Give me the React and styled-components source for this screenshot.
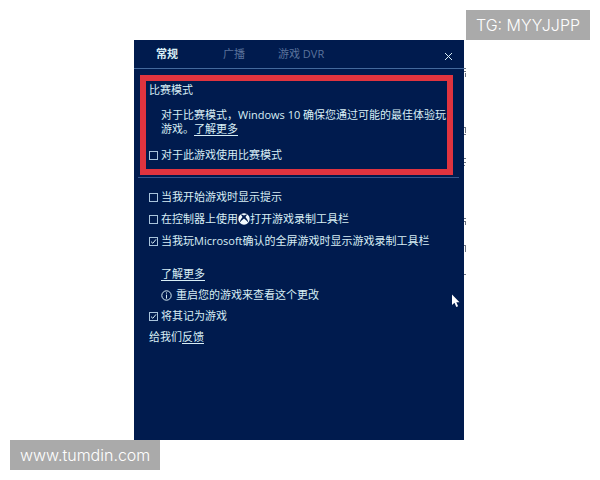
import { useState } from "react";
import styled, { createGlobalStyle } from "styled-components";

const GlobalStyle = createGlobalStyle`
    * {
        box-sizing: border-box;
    }
    body {
        margin: 0;
        background-color: white;
    }
`
const Page = styled.div`
    position: relative;
    min-height: 100vh;
    padding: 40px 0;
    display: grid;
    grid-template-columns: 134fr 330fr 136fr;
`
const Watermark = styled.div`
    position: absolute;
    z-index: 2;
    height: 30px;
    padding: 0 10px;
    background-color: #aaaaaa;
    color: white;
    font-family: Inter, Arial, sans-serif;
    font-size: 16px;
    font-weight: 300;
    line-height: 30px;
`
const TopMark = styled(Watermark)`
    top: 10px;
    right: 10px;
`
const BottomMark = styled(Watermark)`
    bottom: 10px;
    left: 10px;
`
const Panel = styled.main`
    grid-column: 2;
    position: relative;
    background-color: #001b4e;
    color: #d8eef5;
    font-family: "Open Sans", "Noto Sans CJK SC", sans-serif;
    font-size: 11px;
    line-height: 14px;
`
const Header = styled.header`
    display: flex;
    align-items: center;
    height: 29px;
    padding: 0 9px 0 22px;
    border-bottom: 1px solid #44699c;
`
const Tabs = styled.nav`
    flex: 1;
    display: flex;
`
const Tab = styled.button`
    width: ${(props) => props.$width};
    padding: 0;
    border: none;
    background: none;
    text-align: left;
    white-space: nowrap;
    font: inherit;
    font-weight: ${(props) => (props.$active ? 700 : 400)};
    color: ${(props) => (props.$active ? "#d8eef5" : "#5b739c")};
`
const Close = styled.button`
    display: flex;
    padding: 4px 2px 0;
    border: none;
    background: none;
    color: #d8eef5;
`
const Highlight = styled.section`
    margin: 6px 11px 2px 6px;
    padding: 2px 0 7px 3px;
    border: 6px solid #e0343f;
`
const Title = styled.h1`
    margin: 0;
    font-size: 11px;
    font-weight: 400;
    line-height: 14px;
`
const Description = styled.p`
    margin: 11px 0 12px;
    padding-left: 12px;
`
const Link = styled.a`
    color: inherit;
    text-decoration: underline;
    text-underline-offset: 2px;
`
const Options = styled.section`
    margin: 0 5px 0 4px;
    padding: 12px 0 0 11px;
    border-top: 1px solid #34568c;
    display: flex;
    flex-direction: column;
    gap: 8px;
`
const Footer = styled.section`
    margin: 19px 15px 0;
    display: flex;
    flex-direction: column;
    gap: 7px;
`
const Indented = styled.div`
    display: flex;
    align-items: center;
    gap: 4px;
    height: 14px;
    padding-left: 12px;
`
const Label = styled.label`
    display: flex;
    align-items: center;
    gap: 3px;
    height: 14px;
    white-space: nowrap;
`
const LabelText = styled.span`
    display: flex;
    align-items: center;
`
const Checkbox = styled.input`
    appearance: none;
    width: 9px;
    height: 9px;
    margin: 0;
    border: 1px solid #a9c4dc;

    &:checked {
        background: url("data:image/svg+xml,%3Csvg xmlns='http://www.w3.org/2000/svg' viewBox='0 0 7 7'%3E%3Cpath d='M1 3.6 2.8 5.3 6 1.4' fill='none' stroke='%23d8eef5'/%3E%3C/svg%3E");
    }
`
const Cursor = styled.svg`
    position: absolute;
    top: 254px;
    right: 4px;
`
// edge of the page text behind the panel
const Behind = styled.svg`
    position: absolute;
    top: 0;
    left: 100%;
`

function Option({ children, checked }) {
    const [on, setOn] = useState(Boolean(checked));
    return (
        <Label>
            <Checkbox type="checkbox" checked={on} onChange={() => setOn(!on)} />
            <LabelText>{children}</LabelText>
        </Label>
    );
}

function XboxIcon() {
    return (
        <svg width="12" height="12" viewBox="0 0 12 12">
            <circle cx="6" cy="6" r="5.7" fill="#f2fbff" />
            <path
                d="M2.6 1.2Q4.4 1.3 6 2.6Q7.6 1.3 9.4 1.2Q8.6 2.6 7.5 3.9Q10 6.6 10.5 10Q8.6 7.6 6 5.6Q3.4 7.6 1.5 10Q2 6.6 4.5 3.9Q3.4 2.6 2.6 1.2Z"
                fill="#001b4e"
            />
        </svg>
    );
}

function InfoIcon() {
    return (
        <svg width="11" height="11" viewBox="0 0 11 11" fill="none" stroke="#d8eef5">
            <circle cx="5.5" cy="5.5" r="4.7" />
            <path d="M5.5 2.4v1.2M5.5 4.6v4" />
        </svg>
    );
}

export default function App() {
    return (
        <Page>
            <GlobalStyle />
            <TopMark>TG: MYYJJPP</TopMark>
            <Panel>
                <Header>
                    <Tabs>
                        <Tab $active $width="67px">常规</Tab>
                        <Tab $width="55px">广播</Tab>
                        <Tab $width="60px">游戏 DVR</Tab>
                    </Tabs>
                    <Close aria-label="关闭">
                        <svg width="9" height="9" viewBox="0 0 9 9" stroke="currentColor">
                            <path d="M1 1l7 7M8 1l-7 7" />
                        </svg>
                    </Close>
                </Header>
                <Highlight>
                    <Title>比赛模式</Title>
                    <Description>
                        对于比赛模式，Windows 10 确保您通过可能的最佳体验玩
                        <br />
                        游戏。<Link href="#">了解更多</Link>
                    </Description>
                    <Option>对于此游戏使用比赛模式</Option>
                </Highlight>
                <Options>
                    <Option>当我开始游戏时显示提示</Option>
                    <Option>在控制器上使用<XboxIcon />打开游戏录制工具栏</Option>
                    <Option checked>当我玩Microsoft确认的全屏游戏时显示游戏录制工具栏</Option>
                </Options>
                <Footer>
                    <Indented>
                        <Link href="#">了解更多</Link>
                    </Indented>
                    <Indented>
                        <InfoIcon />
                        重启您的游戏来查看这个更改
                    </Indented>
                    <Option checked>将其记为游戏</Option>
                    <div>
                        给我们<Link href="#">反馈</Link>
                    </div>
                </Footer>
                <Cursor width="9" height="14" viewBox="0 0 9 14">
                    <path d="M1 0.5v10.5l2.5-2.2 1.8 4.2 1.8-.8-1.8-4h3.2z" fill="white" />
                </Cursor>
                <Behind width="3" height="240" viewBox="0 0 3 240" fill="#6f7683">
                    <path d="M0 28h2v1H0zM0 31h2v1H0zM1 33h1v4H1zM0 87h2v1H0zM1 88h1v5H1zM0 94h2v1H0zM0 118h2v1H0zM0 122h2v1H0zM0 125h1v1H0zM0 178h2v1H0zM0 181h2v1H0zM1 182h1v3H1zM0 205h2v1H0zM1 206h1v6H1zM0 234h2v1H0z" />
                </Behind>
            </Panel>
            <BottomMark>www.tumdin.com</BottomMark>
        </Page>
    );
}
